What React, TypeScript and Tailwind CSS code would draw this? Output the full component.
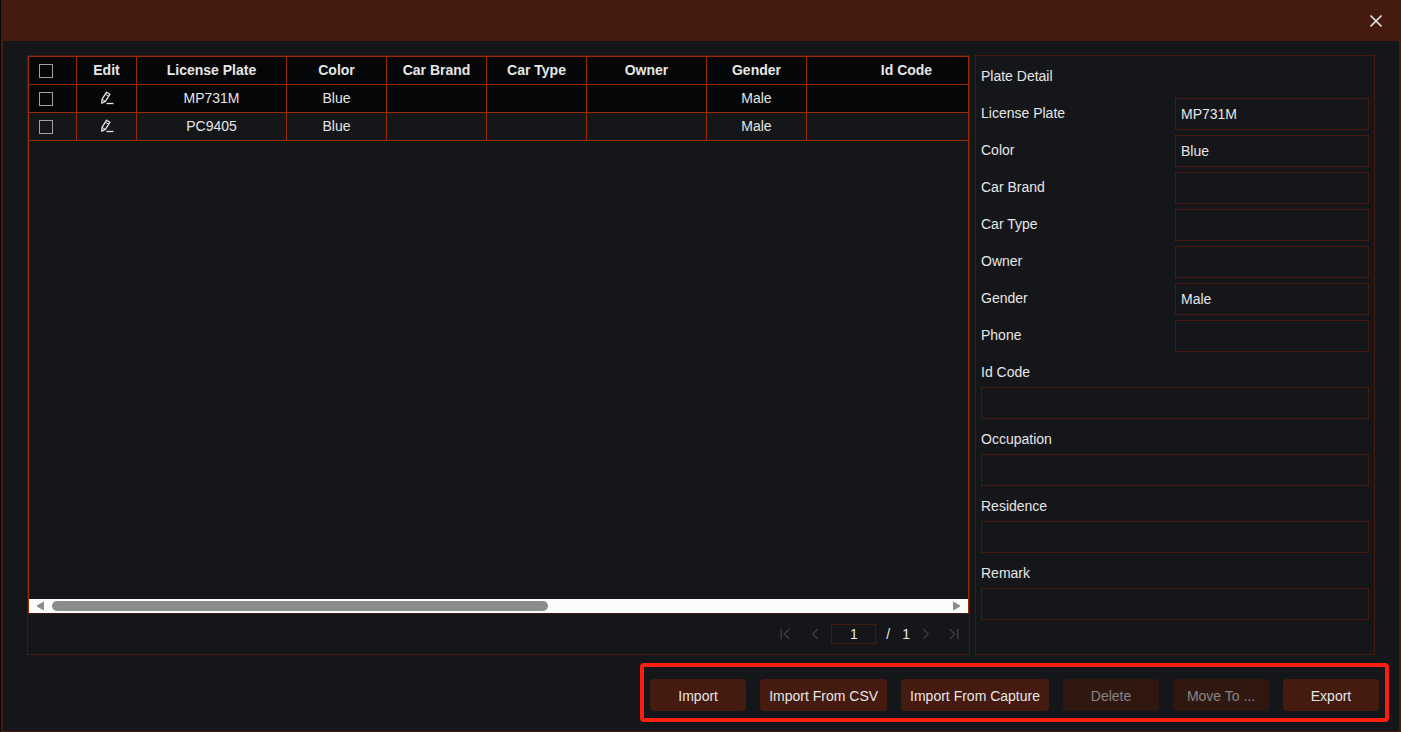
import React, { useState } from 'react';
import { ChevronFirst, ChevronLast, ChevronLeft, ChevronRight } from 'lucide-react';

interface Plate {
  id: number;
  plate: string;
  color: string;
  brand: string;
  type: string;
  owner: string;
  gender: string;
  idCode: string;
}

const plates: Plate[] = [
  { id: 1, plate: 'MP731M', color: 'Blue', brand: '', type: '', owner: '', gender: 'Male', idCode: '' },
  { id: 2, plate: 'PC9405', color: 'Blue', brand: '', type: '', owner: '', gender: 'Male', idCode: '' },
];

const columns: { key: keyof Plate; label: string; width: string }[] = [
  { key: 'plate', label: 'License Plate', width: 'w-[150px]' },
  { key: 'color', label: 'Color', width: 'w-[100px]' },
  { key: 'brand', label: 'Car Brand', width: 'w-[100px]' },
  { key: 'type', label: 'Car Type', width: 'w-[100px]' },
  { key: 'owner', label: 'Owner', width: 'w-[120px]' },
  { key: 'gender', label: 'Gender', width: 'w-[100px]' },
  { key: 'idCode', label: 'Id Code', width: 'w-[200px]' },
];

const shortFields = [
  { id: 'plate', label: 'License Plate', value: 'MP731M' },
  { id: 'color', label: 'Color', value: 'Blue' },
  { id: 'brand', label: 'Car Brand', value: '' },
  { id: 'type', label: 'Car Type', value: '' },
  { id: 'owner', label: 'Owner', value: '' },
  { id: 'gender', label: 'Gender', value: 'Male' },
  { id: 'phone', label: 'Phone', value: '' },
];

const longFields = [
  { id: 'idCode', label: 'Id Code' },
  { id: 'occupation', label: 'Occupation' },
  { id: 'residence', label: 'Residence' },
  { id: 'remark', label: 'Remark' },
];

const actions = [
  { label: 'Import', disabled: false },
  { label: 'Import From CSV', disabled: false },
  { label: 'Import From Capture', disabled: false },
  { label: 'Delete', disabled: true },
  { label: 'Move To ...', disabled: true },
  { label: 'Export', disabled: false },
];

const cell = 'h-7 border-r border-b border-[#992b00] text-center';
const checkbox = 'block ml-[10px] w-[14px] h-[14px] appearance-none border border-[#a0a0a0] checked:bg-[#992b00]';
const field = 'h-8 px-[5px] bg-transparent border border-[#451a0f] outline-none';

const EditIcon: React.FC = () => (
  <svg width="14" height="14" viewBox="0 0 14 14" fill="none" stroke="#e6e6e6" strokeWidth="1.3" strokeLinejoin="round">
    <path d="M1.8 12.2 L2 8.4 L6.6 1.2 L10 3.2 L5.4 10.4 Z" />
    <path d="M2 8.4 L5.4 10.4 M5.4 3.2 L8.6 5.2" strokeWidth="1" />
    <path d="M6.5 12.5 H13.5" />
  </svg>
);

const PlateTable: React.FC = () => {
  const [selected, setSelected] = useState<number[]>([]);

  const toggle = (id: number) => {
    setSelected((prev) => (prev.includes(id) ? prev.filter((x) => x !== id) : [...prev, id]));
  };

  return (
    <div className="flex-1 flex flex-col border-x border-t border-[#992b00] min-h-0">
      <div className="flex-1 overflow-hidden">
        <table className="w-[1716px] table-fixed border-separate border-spacing-0">
          <thead>
            <tr className="bg-[#050607]">
              <th className={`${cell} p-0 w-12`}>
                <input
                  type="checkbox"
                  aria-label="Select all"
                  className={checkbox}
                  checked={selected.length === plates.length}
                  onChange={(e) => setSelected(e.target.checked ? plates.map((p) => p.id) : [])}
                />
              </th>
              <th className={`${cell} px-0 pt-0 pb-[2px] w-[60px]`}>Edit</th>
              {columns.map((col) => (
                <th key={col.key} className={`${cell} px-0 pt-0 pb-[2px] ${col.width}`}>{col.label}</th>
              ))}
              <th className={`${cell} p-0`}></th>
            </tr>
          </thead>
          <tbody>
            {plates.map((row, i) => (
              <tr key={row.id} className={i % 2 === 0 ? 'bg-[#050607]' : ''}>
                <td className={`${cell} p-0`}>
                  <input
                    type="checkbox"
                    aria-label={`Select ${row.plate}`}
                    className={checkbox}
                    checked={selected.includes(row.id)}
                    onChange={() => toggle(row.id)}
                  />
                </td>
                <td className={`${cell} px-0 pt-0 pb-[2px]`}>
                  <button aria-label={`Edit ${row.plate}`} className="block mx-auto">
                    <EditIcon />
                  </button>
                </td>
                {columns.map((col) => (
                  <td key={col.key} className={`${cell} px-0 pt-0 pb-[2px]`}>{row[col.key]}</td>
                ))}
                <td className={`${cell} p-0`}></td>
              </tr>
            ))}
          </tbody>
        </table>
      </div>

      {/* horizontal scrollbar */}
      <div className="h-[14px] flex items-center px-[7px] gap-2 bg-[#fcfcfc]">
        <svg width="8" height="10" viewBox="0 0 8 10" fill="#8b8b8b">
          <path d="M8 0.5 V9.5 L1.2 5.8 Q0.7 5 1.2 4.2 Z" />
        </svg>
        <div className="flex-1 h-[10px]">
          <div className="w-5/9 h-full rounded-full bg-[#8b8b8b]"></div>
        </div>
        <svg width="8" height="10" viewBox="0 0 8 10" fill="#8b8b8b">
          <path d="M0 0.5 V9.5 L6.8 5.8 Q7.3 5 6.8 4.2 Z" />
        </svg>
      </div>
    </div>
  );
};

const Pagination: React.FC = () => (
  <div className="h-[41px] flex items-center justify-end pr-[6px] border-t border-[#451a0f]">
    <button aria-label="First page" disabled className="text-[#3a3b3e] mr-3">
      <ChevronFirst size={18} />
    </button>
    <button aria-label="Previous page" disabled className="text-[#3a3b3e] mr-[7px]">
      <ChevronLeft size={18} />
    </button>
    <input
      aria-label="Page"
      defaultValue="1"
      className="w-[45px] h-5 text-center bg-transparent border border-[#451a0f] outline-none"
    />
    <span className="ml-[10px]">/</span>
    <span className="ml-3">1</span>
    <button aria-label="Next page" disabled className="text-[#3a3b3e] ml-[7px] mr-[10px]">
      <ChevronRight size={18} />
    </button>
    <button aria-label="Last page" disabled className="text-[#3a3b3e]">
      <ChevronLast size={18} />
    </button>
  </div>
);

const PlateDetail: React.FC = () => (
  <form className="w-[400px] shrink-0 p-[5px] flex flex-col gap-[5px] border border-[#451a0f]">
    <h2 className="h-8 leading-[30px]">Plate Detail</h2>
    {shortFields.map((f) => (
      <div key={f.id} className="grid grid-cols-2">
        <label htmlFor={f.id} className="leading-[30px]">{f.label}</label>
        <input id={f.id} defaultValue={f.value} className={field} />
      </div>
    ))}
    {longFields.map((f) => (
      <div key={f.id} className="flex flex-col">
        <label htmlFor={f.id} className="leading-[30px]">{f.label}</label>
        <input id={f.id} className={field} />
      </div>
    ))}
  </form>
);

const App: React.FC = () => {
  return (
    <div className="min-h-screen pl-px flex bg-[#08090b] font-['Liberation_Sans',Arial,sans-serif] text-[14px] leading-5 text-[#e6e6e6]">
      <div className="flex-1 min-w-0 flex flex-col bg-[#15161a] border-x-2 border-b border-[#451a0f]">
        <header className="h-[41px] shrink-0 flex items-center justify-end pr-4 bg-[#451a0f]">
          <button aria-label="Close">
            <svg width="14" height="14" viewBox="0 0 14 14" stroke="#e6e6e6" strokeWidth="1.7">
              <path d="M1.5 1.5 L12.5 12.5 M12.5 1.5 L1.5 12.5" />
            </svg>
          </button>
        </header>

        <main className="flex-1 flex gap-[5px] px-6 pt-[14px]">
          <section className="flex-1 min-w-0 flex flex-col border border-[#451a0f]">
            <PlateTable />
            <Pagination />
          </section>
          <PlateDetail />
        </main>

        <footer className="flex justify-end pt-2 pr-[10px] pb-[9px]">
          <div className="flex gap-[14px] px-[6px] pt-3 pb-[7px] border-4 border-[#ff1c10] rounded-[4px]">
            {actions.map((a) => (
              <button
                key={a.label}
                disabled={a.disabled}
                className="h-8 min-w-24 px-[9px] pt-[2px] rounded-[4px] bg-[#451a0f] disabled:bg-[#301811] disabled:text-[#8a8583]"
              >
                {a.label}
              </button>
            ))}
          </div>
        </footer>
      </div>
    </div>
  );
};

export default App;
